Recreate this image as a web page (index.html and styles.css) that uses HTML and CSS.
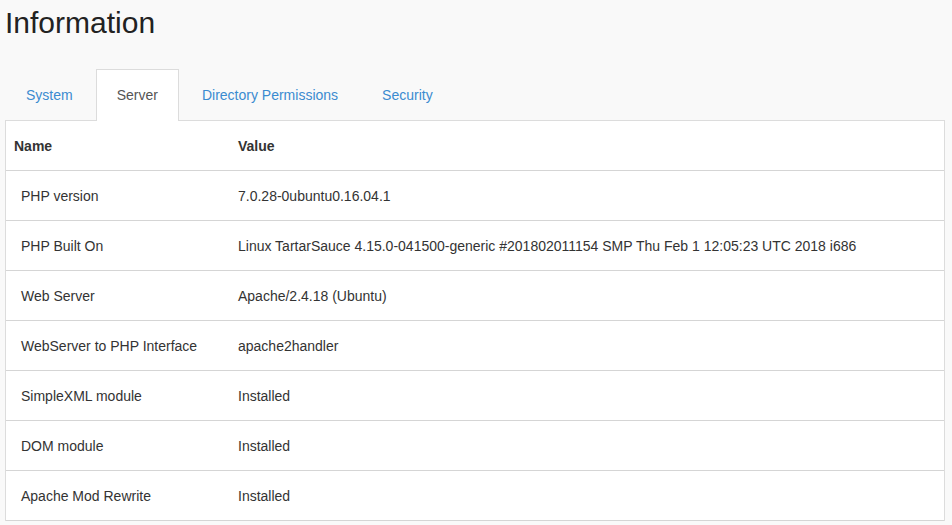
FILE: index.html
```html
<!DOCTYPE html>
<html>
<head>
<meta charset="utf-8">
<link rel="stylesheet" href="styles.css">
</head>
<body>
<div class="page">
  <h1 class="title">Information</h1>
  <ul class="tabs">
    <li class="tab"><a>System</a></li>
    <li class="tab active"><a>Server</a></li>
    <li class="tab"><a>Directory Permissions</a></li>
    <li class="tab"><a>Security</a></li>
  </ul>
  <div class="panel">
    <table class="info">
      <thead>
        <tr><th class="c-name">Name</th><th>Value</th></tr>
      </thead>
      <tbody>
        <tr><td class="c-name">PHP version</td><td>7.0.28-0ubuntu0.16.04.1</td></tr>
        <tr><td class="c-name">PHP Built On</td><td>Linux TartarSauce 4.15.0-041500-generic #201802011154 SMP Thu Feb 1 12:05:23 UTC 2018 i686</td></tr>
        <tr><td class="c-name">Web Server</td><td>Apache/2.4.18 (Ubuntu)</td></tr>
        <tr><td class="c-name">WebServer to PHP Interface</td><td>apache2handler</td></tr>
        <tr><td class="c-name">SimpleXML module</td><td>Installed</td></tr>
        <tr><td class="c-name">DOM module</td><td>Installed</td></tr>
        <tr><td class="c-name">Apache Mod Rewrite</td><td>Installed</td></tr>
      </tbody>
    </table>
  </div>
</div>
</body>
</html>
```
FILE: styles.css
```css
html, body {
  margin: 0;
  padding: 0;
  background: #f9f9f9;
  font-family: "Liberation Sans", Arial, sans-serif;
  font-size: 14px;
  color: #333;
  overflow: hidden;
}
.page {
  padding: 0 7px 0 5px;
}
.title {
  margin: 0;
  padding-top: 5px;
  font-size: 30px;
  font-weight: normal;
  line-height: 36px;
  color: #222;
}
.tabs {
  list-style: none;
  margin: 28px 0 0 0;
  padding: 0;
  display: flex;
  gap: 2px;
}
.tab a {
  display: block;
  padding: 15px 20px;
  line-height: 20px;
  border: 1px solid transparent;
  border-bottom: none;
  color: #3b8bd0;
}
.tab.active a {
  background: #fff;
  border-color: #dcdcdc;
  color: #555;
  position: relative;
  margin-bottom: -1px;
  padding-bottom: 16px;
}
.panel {
  background: #fff;
  border: 1px solid #dcdcdc;
  border-bottom: none;
  box-shadow: 0 1px 0 #ececec;
}
.info {
  width: 100%;
  border-collapse: collapse;
}
.info th, .info td {
  text-align: left;
  padding: 15px 8px 14px 8px;
  line-height: 20px;
}
.info th {
  font-weight: bold;
  color: #333;
}
.info .c-name {
  width: 208px;
}
.info td.c-name {
  padding-left: 15px;
  width: 201px;
}
.info tr {
  border-bottom: 1px solid #d5d5d5;
}
```
